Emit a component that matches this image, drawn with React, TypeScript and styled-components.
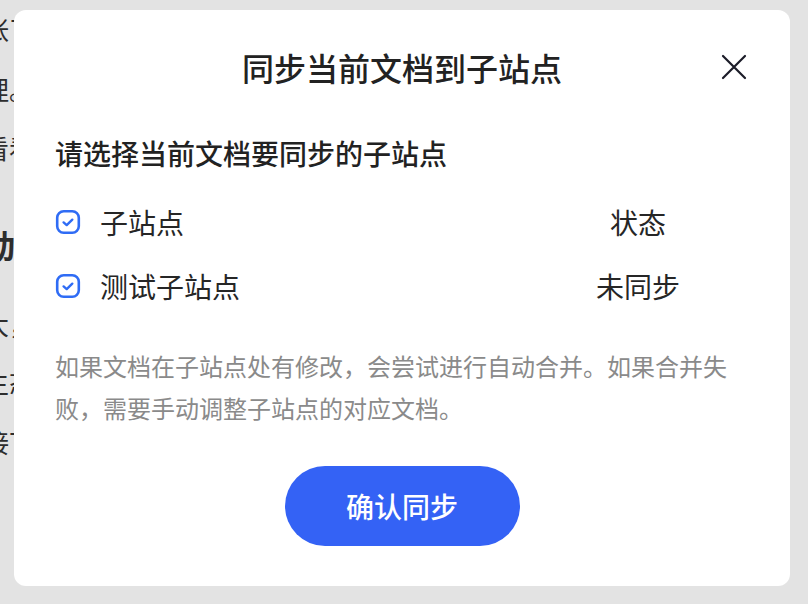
import styled, { createGlobalStyle } from 'styled-components'

const GlobalStyle = createGlobalStyle`
  html, body {
    margin: 0;
    padding: 0;
    background: #ffffff;
    overflow: hidden;
    font-family: "Noto Sans CJK SC", "Noto Sans", sans-serif;
  }
`

const sites = [
  { name: '子站点', status: '状态' },
  { name: '测试子站点', status: '未同步' },
]

const pageLines = [
  { text: '张了解更多', top: 14, big: false },
  { text: '理。', top: 30, big: false },
  { text: '看看', top: 29, big: false },
  { text: '动态', top: 66, big: true },
  { text: '大，', top: 50, big: false },
  { text: '生态', top: 28, big: false },
  { text: '接下来', top: 30, big: false },
]

const CheckIcon = () => (
  <svg width="26" height="26" viewBox="0 0 26 26" fill="none">
    <rect x="2.2" y="2.2" width="21.6" height="21.6" rx="6.5" stroke="#2f6cf5" strokeWidth="2.6" />
    <path d="M8.6 13.4l3.1 2.7 5.6-5.4" stroke="#2f6cf5" strokeWidth="2.4" strokeLinecap="round" strokeLinejoin="round" />
  </svg>
)

const CloseIcon = () => (
  <svg width="26" height="26" viewBox="0 0 26 26" fill="none">
    <path d="M2 2l22 22M24 2L2 24" stroke="#1b1c28" strokeWidth="2.2" strokeLinecap="round" />
  </svg>
)

const App = () => {
  return (
    <>
      <GlobalStyle />
      <Page>
        {pageLines.map((l, i) => (
          <PageLine key={i} big={l.big} style={{ marginTop: l.top }}>
            {l.text}
          </PageLine>
        ))}
      </Page>
      <Overlay>
        <Modal>
          <Header>
            <Title>同步当前文档到子站点</Title>
            <CloseButton aria-label="关闭">
              <CloseIcon />
            </CloseButton>
          </Header>
          <Subtitle>请选择当前文档要同步的子站点</Subtitle>
          <SiteList>
            {sites.map((s) => (
              <SiteRow key={s.name}>
                <SiteName>
                  <CheckIcon />
                  <span>{s.name}</span>
                </SiteName>
                <SiteStatus>{s.status}</SiteStatus>
              </SiteRow>
            ))}
          </SiteList>
          <Note>
            如果文档在子站点处有修改，会尝试进行自动合并。如果合并失败，需要手动调整子站点的对应文档。
          </Note>
          <Footer>
            <ConfirmButton>确认同步</ConfirmButton>
          </Footer>
        </Modal>
      </Overlay>
    </>
  )
}

const Page = styled.div`
  display: flex;
  flex-direction: column;
  margin-left: -17px;
  color: #333333;
`

const PageLine = styled.div<{ big: boolean }>`
  font-size: ${({ big }) => (big ? '32px' : '26px')};
  font-weight: ${({ big }) => (big ? 600 : 400)};
  line-height: 30px;
  white-space: nowrap;
`

const Overlay = styled.div`
  position: fixed;
  inset: 0;
  background: rgba(0, 0, 0, 0.11);
  display: flex;
  align-items: flex-start;
  justify-content: flex-start;
`

const Modal = styled.div`
  margin: 10px 0 0 14px;
  width: 776px;
  box-sizing: border-box;
  padding: 29px 41px 40px;
  background: #ffffff;
  border-radius: 12px;
  display: flex;
  flex-direction: column;
`

const Header = styled.div`
  position: relative;
  height: 56px;
  display: flex;
  align-items: center;
  justify-content: center;
`

const Title = styled.h2`
  margin: 0;
  font-size: 32px;
  font-weight: 500;
  color: #222222;
  line-height: 56px;
`

const CloseButton = styled.button`
  position: absolute;
  right: 2px;
  top: 15px;
  width: 26px;
  height: 26px;
  padding: 0;
  border: none;
  background: transparent;
  display: flex;
`

const Subtitle = styled.div`
  margin-top: 38px;
  font-size: 28px;
  font-weight: 500;
  line-height: 40px;
  color: #222222;
`

const SiteList = styled.div`
  margin-top: 17px;
  display: flex;
  flex-direction: column;
`

const SiteRow = styled.div`
  height: 64px;
  display: grid;
  grid-template-columns: 1fr 222px;
  align-items: center;
`

const SiteName = styled.div`
  display: flex;
  align-items: center;
  gap: 19px;
  font-size: 28px;
  color: #262626;
`

const SiteStatus = styled.div`
  text-align: center;
  font-size: 28px;
  color: #262626;
`

const Note = styled.p`
  margin: 27px 0 0;
  font-size: 24px;
  line-height: 42px;
  color: #8a8a8a;
`

const Footer = styled.div`
  margin-top: 37px;
  display: flex;
  justify-content: center;
`

const ConfirmButton = styled.button`
  width: 235px;
  height: 80px;
  border: none;
  border-radius: 40px;
  background: #3462f5;
  color: #ffffff;
  font-family: "Noto Sans CJK SC", "Noto Sans", sans-serif;
  font-size: 28px;
  font-weight: 500;
`

export default App
